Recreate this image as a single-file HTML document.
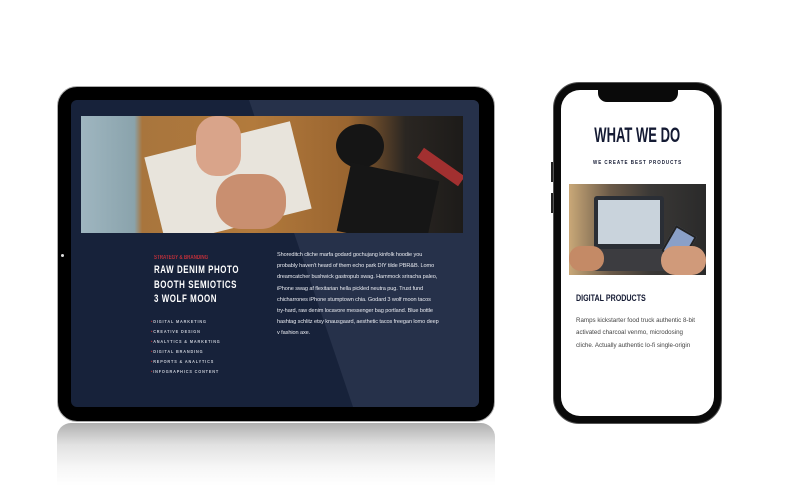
<!DOCTYPE html>
<html><head><meta charset="utf-8"><style>
*{margin:0;padding:0;box-sizing:border-box}
body{width:800px;height:486px;background:#fff;position:relative;overflow:hidden;font-family:"Liberation Sans",sans-serif}
.abs{position:absolute}
.cond{font-family:"Liberation Sans",sans-serif;font-weight:bold;transform-origin:0 0;white-space:nowrap}
</style></head><body>
<!-- reflection -->
<div class="abs" style="left:57px;top:423px;width:438px;height:63px;border-radius:14px 14px 0 0;background:linear-gradient(#b0b0b0,#e2e2e2 35%,#f6f6f6 70%,#fff)"></div>
<!-- tablet -->
<div class="abs" style="left:57px;top:86px;width:438px;height:336px;background:#000;border-radius:20px;border:1px solid #aaa"></div>
<div class="abs" style="left:61px;top:254px;width:3px;height:3px;border-radius:50%;background:#ddd"></div>
<div class="abs" style="left:71px;top:100px;width:408px;height:307px;background:#17223a;border-radius:6px;overflow:hidden">
  <div class="abs" style="left:0;top:0;width:408px;height:307px;background:#26314a;clip-path:polygon(178px 0,408px 0,408px 307px,282px 307px)"></div>
  <div class="abs" style="left:10px;top:16px;width:382px;height:117px;overflow:hidden;background:linear-gradient(90deg,#9fb6c0 0,#8aa3ac 14%,#a8753d 16%,#b27a3c 45%,#9a6530 70%,#2a2622 85%,#1d1b19 100%)">
    <div class="abs" style="left:72px;top:22px;width:150px;height:90px;background:#e8e4dc;transform:rotate(-14deg)"></div>
    <div class="abs" style="left:115px;top:0;width:45px;height:60px;background:#d9a48a;border-radius:20px"></div>
    <div class="abs" style="left:135px;top:58px;width:70px;height:55px;background:#c98f70;border-radius:25px"></div>
    <div class="abs" style="left:255px;top:8px;width:48px;height:44px;background:#151515;border-radius:50%"></div>
    <div class="abs" style="left:262px;top:55px;width:90px;height:70px;background:#161616;transform:rotate(12deg)"></div>
    <div class="abs" style="left:335px;top:45px;width:50px;height:12px;background:#a23030;transform:rotate(35deg)"></div>
  </div>
  <div class="abs cond" style="left:83px;top:155px;font-size:6px;color:#c0303a;transform:scaleX(.75)">STRATEGY &amp; BRANDING</div>
  <div class="abs cond" style="left:83px;top:163px;font-size:11px;line-height:14.5px;color:#fff;letter-spacing:.8px;transform:scaleX(.72)">RAW DENIM PHOTO<br>BOOTH SEMIOTICS<br>3 WOLF MOON</div>
  <div class="abs cond" style="left:80px;top:217px;font-size:4.5px;line-height:10px;color:#c8ccd6;letter-spacing:1px;transform:scaleX(.85)">
    <span style="color:#c0303a">•</span>DIGITAL MARKETING<br><span style="color:#c0303a">•</span>CREATIVE DESIGN<br><span style="color:#c0303a">•</span>ANALYTICS &amp; MARKETING<br><span style="color:#c0303a">•</span>DIGITAL BRANDING<br><span style="color:#c0303a">•</span>REPORTS &amp; ANALYTICS<br><span style="color:#c0303a">•</span>INFOGRAPHICS CONTENT</div>
  <div class="abs" style="left:206px;top:150px;width:162px;font-size:5.6px;line-height:11.2px;color:#e8eaf0;letter-spacing:-.1px">Shoreditch cliche marfa godard gochujang kinfolk hoodie you probably haven't heard of them echo park DIY tilde PBR&amp;B. Lomo dreamcatcher bushwick gastropub swag. Hammock sriracha paleo, iPhone swag af flexitarian hella pickled neutra pug. Trust fund chicharrones iPhone stumptown chia. Godard 3 wolf moon tacos try-hard, raw denim locavore messenger bag portland. Blue bottle hashtag schlitz etsy knausgaard, aesthetic tacos freegan lomo deep v fashion axe.</div>
</div>
<!-- phone -->
<div class="abs" style="left:551px;top:162px;width:3px;height:20px;background:#222"></div>
<div class="abs" style="left:551px;top:193px;width:3px;height:20px;background:#222"></div>
<div class="abs" style="left:553px;top:82px;width:169px;height:342px;background:#0a0a0a;border-radius:26px;border:1px solid #555"></div>
<div class="abs" style="left:561px;top:90px;width:153px;height:326px;background:#fff;border-radius:19px;overflow:hidden">
  <div class="abs" style="left:37px;top:-2px;width:80px;height:14px;background:#0a0a0a;border-radius:0 0 9px 9px"></div>
  <div class="abs" style="left:0;top:34px;width:153px;text-align:center"><span class="cond" style="display:inline-block;font-size:21px;color:#141a33;transform:scaleX(.62);transform-origin:50% 0">WHAT WE DO</span></div>
  <div class="abs" style="left:0;top:61px;width:153px;text-align:center"><span class="cond" style="display:inline-block;font-size:5px;color:#141a33;letter-spacing:1.1px;transform:scaleX(.9);transform-origin:50% 0">WE CREATE BEST PRODUCTS</span></div>
  <div class="abs" style="left:8px;top:94px;width:137px;height:91px;overflow:hidden;background:linear-gradient(90deg,#c9a878,#6b5a48 30%,#3a3836 60%,#2a2a2a)">
    <div class="abs" style="left:25px;top:12px;width:70px;height:56px;background:#2a2e35;border-radius:3px"></div>
    <div class="abs" style="left:29px;top:16px;width:62px;height:44px;background:#c9d3dc"></div>
    <div class="abs" style="left:15px;top:65px;width:85px;height:22px;background:#3c3c40;transform:skewX(-20deg)"></div>
    <div class="abs" style="left:0;top:62px;width:35px;height:25px;background:#c48a66;border-radius:12px"></div>
    <div class="abs" style="left:98px;top:45px;width:24px;height:30px;background:#8aa0c8;transform:rotate(30deg);border:2px solid #222"></div>
    <div class="abs" style="left:92px;top:62px;width:45px;height:29px;background:#d09a7a;border-radius:14px"></div>
  </div>
  <div class="abs cond" style="left:15px;top:203px;font-size:9.5px;color:#141a33;transform:scaleX(.75)">DIGITAL PRODUCTS</div>
  <div class="abs" style="left:15px;top:225px;width:125px;font-size:6.2px;line-height:12.3px;color:#444">Ramps kickstarter food truck authentic 8-bit activated charcoal venmo, microdosing cliche. Actually authentic lo-fi single-origin</div>
</div>
</body></html>
